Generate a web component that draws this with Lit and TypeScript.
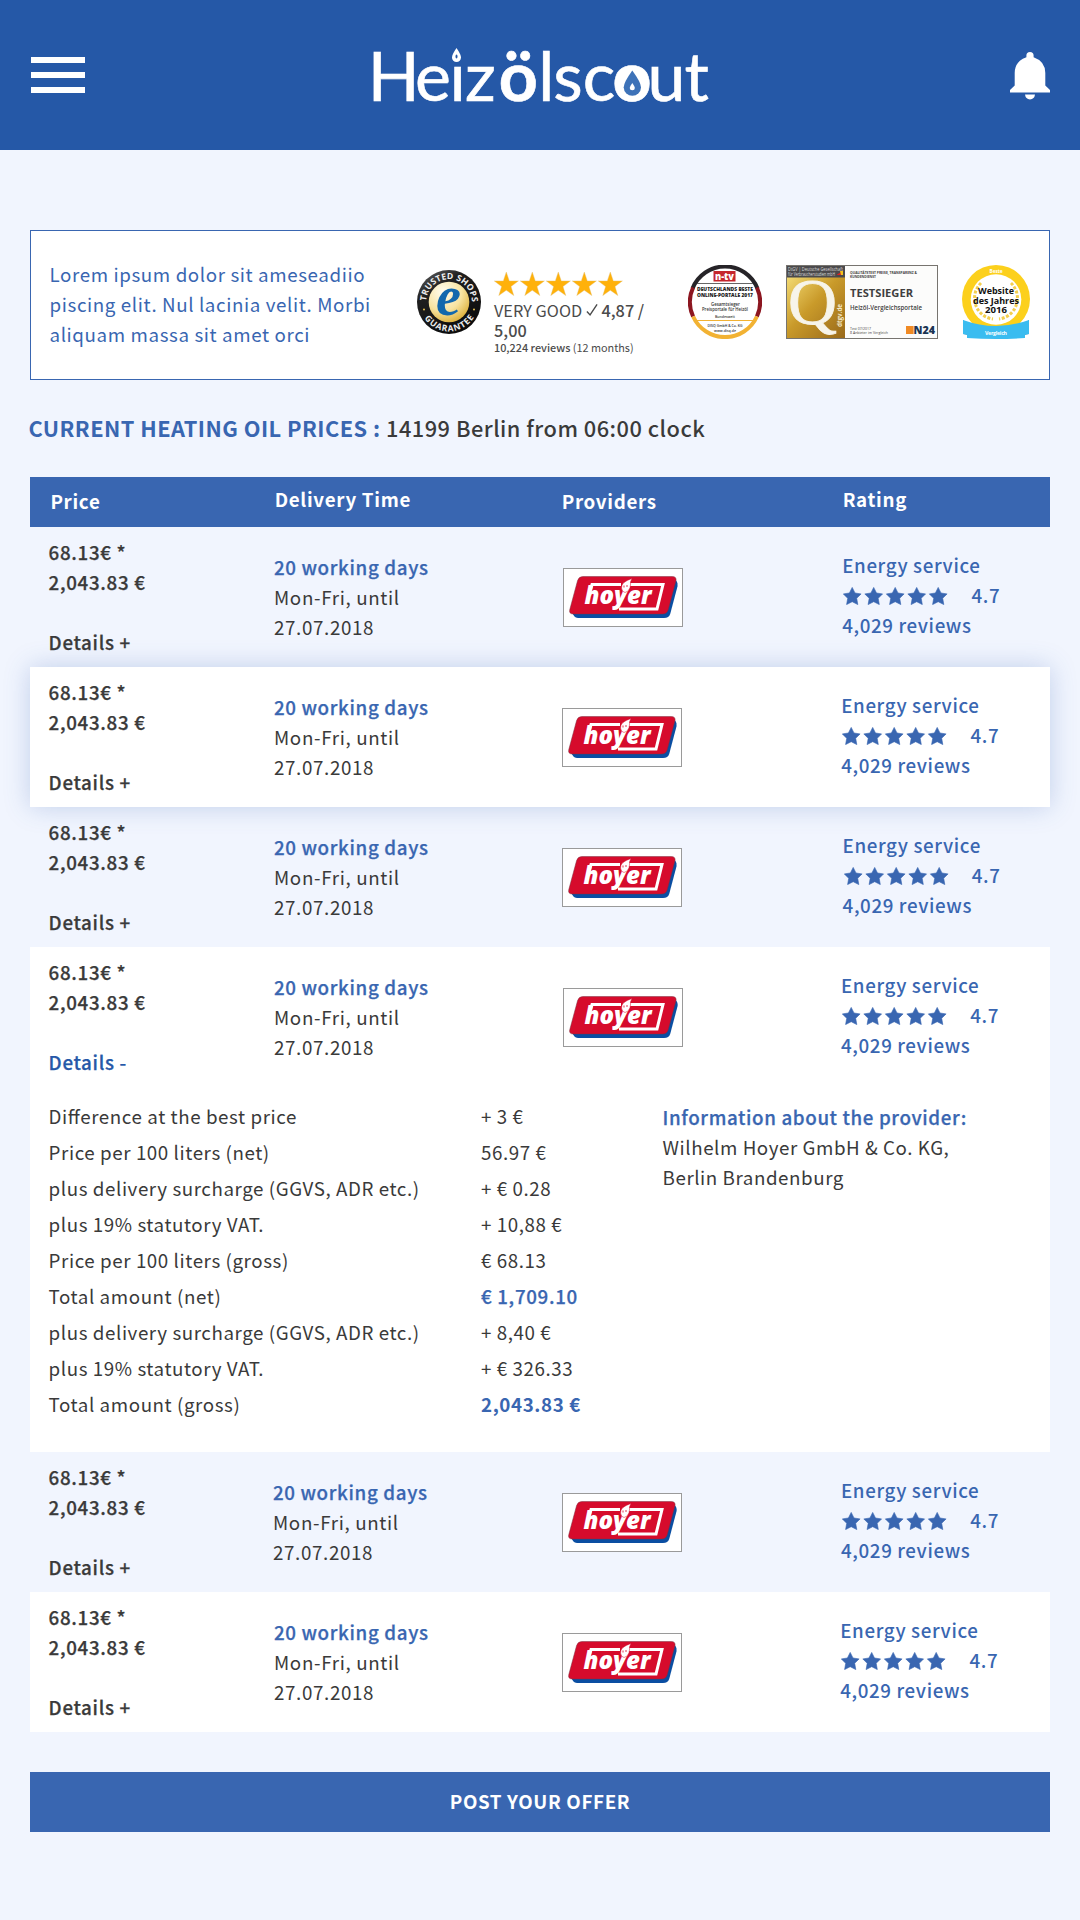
import { LitElement, html, css, svg, nothing } from 'lit';
import { customElement, property } from 'lit/decorators.js';

interface Offer {
  open?: boolean;
  tone: 'plain' | 'white' | 'raised';
  deliveryX: number;
  logoX: number;
  ratingX: number;
}

const OFFERS: Offer[] = [
  { tone: 'plain', deliveryX: 0, logoX: 2, ratingX: 1.2 },
  { tone: 'raised', deliveryX: 0, logoX: 1, ratingX: 0.2 },
  { tone: 'plain', deliveryX: 0, logoX: 1, ratingX: 1.6 },
  { tone: 'white', deliveryX: 0, logoX: 2, ratingX: 0 },
  { tone: 'plain', deliveryX: -1, logoX: 1, ratingX: 0 },
  { tone: 'white', deliveryX: 0, logoX: 1, ratingX: -0.8 },
];
OFFERS[3].open = true;

const BREAKDOWN: { label: string; value: string; level?: string }[] = [
  { label: 'Difference at the best price', value: '+ 3 €' },
  { label: 'Price per 100 liters (net)', value: '56.97 €' },
  { label: 'plus delivery surcharge (GGVS, ADR etc.)', value: '+ € 0.28' },
  { label: 'plus 19% statutory VAT.', value: '+ 10,88 €' },
  { label: 'Price per 100 liters (gross)', value: '€ 68.13' },
  { label: 'Total amount (net)', value: '€ 1,709.10', level: 'sub' },
  { label: 'plus delivery surcharge (GGVS, ADR etc.)', value: '+ 8,40 €' },
  { label: 'plus 19% statutory VAT.', value: '+ € 326.33' },
  { label: 'Total amount (gross)', value: '2,043.83 €', level: 'total' },
];

const FIVE = [0, 1, 2, 3, 4];

@customElement('hoyer-logo')
class HoyerLogo extends LitElement {
  static styles = css`
    :host { display: block; box-sizing: border-box; width: 120px; height: 59px; border: 1px solid #9a9a9a; background: #fff; }
    svg { display: block; }
    .name { font: italic 800 24px "Open Sans", sans-serif; letter-spacing: 0; fill: #fff; }
  `;
  render() {
    return html`<svg width="118" height="57" viewBox="1 1 118 57">
      <path fill="#0a4ea2" d="M7 42 L11.5 48.6 Q12.5 50 15 50 H101 Q106 50 107.2 46 L114.6 18 Q115 15 113.5 13 L110 9 Z"/>
      <path fill="#d60b2c" stroke="#7c3040" stroke-width=".5" d="M20 8.5 H109 Q114 8.5 112.9 13 L105.3 41.5 Q104 46 99.5 46 H10.5 Q5.6 46 6.8 41.5 L14.6 12.5 Q15.8 8.5 20 8.5 Z"/>
      <path fill="none" stroke="#fff" stroke-width="3" d="M26.5 25 L29 16.4 H58 M66 16.4 H100 L94 41 H56"/>
      <text class="name" x="21.5" y="36.3" textLength="67" lengthAdjust="spacingAndGlyphs">hoyer</text>
      <path fill="#fff" stroke="#d60b2c" stroke-width=".5" d="M69 10.5 Q58 14 58.5 20 Q59 24 62 24.5 Q67 23 67.5 17 Q67 13.5 69 10.5 Z"/>
      <path fill="none" stroke="#d60b2c" stroke-width=".8" d="M61 19.5 V17.5 M64 19 V17"/>
    </svg>`;
  }
}

@customElement('trust-seals')
class TrustSeals extends LitElement {
  static styles = css`
    :host { display: flex; align-items: flex-start; font-family: "Noto Sans CJK SC", sans-serif; }
    svg { display: block; flex: none; }
    .shop { margin-top: 39px; }
    .score { width: 170px; margin: 41px 0 0 13px; color: #4b4b4b; }
    .verdict { font-size: 16.3px; line-height: 20px; margin-top: 4px; white-space: nowrap; }
    .verdict b { font-weight: 500; }
    .verdict .tick { display: inline-block; }
    .count { font-size: 10.85px; line-height: 14px; white-space: nowrap; }
    .count b { font-weight: 500; }
    .ntv, .test, .site { margin: 34px 0 0 24px; }
    .ring { font: 700 8.6px "Open Sans", sans-serif; fill: #eee; }
    .e { font: italic 700 58px "Liberation Serif", serif; fill: #1268ad; }
    .cond { font-family: "Open Sans", sans-serif; }
  `;
  render() {
    return html`
      <svg class="shop" width="64" height="64" viewBox="0 0 64 64">
        <defs>
          <radialGradient id="gold" cx=".35" cy=".25" r=".85"><stop offset="0" stop-color="#fffdf0"/><stop offset=".55" stop-color="#f7e3a0"/><stop offset="1" stop-color="#d9a92c"/></radialGradient>
          <linearGradient id="dark" x1="0" y1="0" x2=".6" y2="1"><stop offset="0" stop-color="#6a6a6a"/><stop offset=".35" stop-color="#1f1f1f"/><stop offset="1" stop-color="#0c0c0c"/></linearGradient>
          <path id="up" d="M9.2 32 A22.8 22.8 0 0 1 54.8 32"/>
          <path id="down" d="M2.6 32 A29.4 29.4 0 0 0 61.4 32"/>
        </defs>
        <circle cx="32" cy="32" r="32" fill="url(#dark)"/>
        <circle cx="32" cy="32" r="20.3" fill="url(#gold)"/>
        <text class="ring"><textPath href="#up" startOffset="1" textLength="70">TRUSTED SHOPS</textPath></text>
        <text class="ring"><textPath href="#down" startOffset="17" textLength="59">GUARANTEE</textPath></text>
        <circle cx="7" cy="39.5" r="1" fill="#e6c04f"/><circle cx="57" cy="39.5" r="1" fill="#e6c04f"/>
        <text class="e" x="19" y="44.5" textLength="25" lengthAdjust="spacingAndGlyphs">e</text>
      </svg>
      <div class="score">
        <svg width="130" height="24" viewBox="0 0 130 24">
          ${FIVE.map((i) => svg`<path transform="translate(${i * 26} 0)" fill="#ffb10a" stroke="#e2c27a" stroke-width=".4" d="M12.3 0 L15.3 8.9 H24.4 L17 14.6 L19.8 23.6 L12.3 18.2 L4.8 23.6 L7.6 14.6 L.3 8.9 H9.3 Z"/>`)}
        </svg>
        <div class="verdict">VERY GOOD <svg class="tick" width="12" height="14" viewBox="0 0 13 14"><path d="M1 8.6 L4.4 12.4 L12 1" fill="none" stroke="#4b4b4b" stroke-width="1.5"/></svg> <b>4,87 /<br>5,00</b></div>
        <div class="count"><b>10,224 reviews</b> (12 months)</div>
      </div>
      <svg class="ntv cond" width="74" height="74" viewBox="0 0 74 74">
        <circle cx="37" cy="37" r="35" fill="#fff"/>
        <g fill="none" stroke-width="4">
          <path stroke="#262428" d="M4.5 23.5 A35 35 0 0 1 69.5 23.5"/>
          <path stroke="#8c1620" d="M5.1 22.5 A35 35 0 0 0 5.1 51.5 M68.9 22.5 A35 35 0 0 1 68.9 51.5"/>
          <path stroke="#f2b233" d="M5.1 51.5 A35 35 0 0 0 68.9 51.5"/>
        </g>
        <rect x="25.5" y="6" width="22" height="10.5" fill="#c5262d"/>
        <text x="27" y="15" font-size="11" font-weight="800" fill="#fff" textLength="19" lengthAdjust="spacingAndGlyphs">n-tv</text>
        <path d="M9 18.5 H65" stroke="#555" stroke-width=".9"/>
        <g fill="#222" font-weight="800" font-size="5.4">
          <text x="9" y="26" textLength="56" lengthAdjust="spacingAndGlyphs">DEUTSCHLANDS BESTE</text>
          <text x="9" y="31.5" textLength="56" lengthAdjust="spacingAndGlyphs">ONLINE-PORTALE 2017</text>
        </g>
        <g fill="#333" font-weight="600" font-size="5">
          <text x="23" y="40.5" textLength="29" lengthAdjust="spacingAndGlyphs">Gesamtsieger</text>
          <text x="14" y="46" textLength="46" lengthAdjust="spacingAndGlyphs">Preisportale für Heizöl</text>
          <text x="27" y="53" font-size="3.6" textLength="20" lengthAdjust="spacingAndGlyphs">Bundesweit</text>
          <text x="19.5" y="62" font-size="4" textLength="35" lengthAdjust="spacingAndGlyphs">DISQ GmbH &amp; Co. KG</text>
          <text x="26" y="66.7" font-size="3.8" textLength="22" lengthAdjust="spacingAndGlyphs">www.disq.de</text>
        </g>
        <path d="M6 55.5 H68" stroke="#f2b233" stroke-width="1"/>
      </svg>
      <svg class="test cond" width="152" height="74" viewBox="0 0 152 74">
        <defs><linearGradient id="q" x1="0" y1="0" x2="1" y2="1"><stop offset="0" stop-color="#f3da72"/><stop offset=".45" stop-color="#c99a2a"/><stop offset="1" stop-color="#99691a"/></linearGradient></defs>
        <rect x=".5" y=".5" width="151" height="73" fill="#fcfcfb" stroke="#77746f"/>
        <rect x="1" y="12" width="58" height="61" fill="url(#q)"/>
        <rect x="1" y="1" width="58" height="11.5" fill="#4b4a4c"/>
        <g fill="#ddd" font-size="4.6">
          <text x="2" y="5.8" textLength="55" lengthAdjust="spacingAndGlyphs">DtGV | Deutsche Gesellschaft</text>
          <text x="2" y="10.6" textLength="47" lengthAdjust="spacingAndGlyphs">für Verbraucherstudien mbH</text>
        </g>
        <path d="M51 9.5 L57 6 V10 H51 Z" fill="#d22"/><path d="M54 6 H57 V10 H55 Z" fill="#f4c21c"/>
        <text x="2" y="59" font-size="65" font-family="Liberation Serif, serif" fill="#f7f4ea" stroke="#f7f4ea" stroke-width=".8" textLength="49" lengthAdjust="spacingAndGlyphs">Q</text>
        <text transform="translate(55.5 62) rotate(-90)" font-size="7" font-weight="700" fill="#f3e8c8" textLength="23" lengthAdjust="spacingAndGlyphs">dtgv.de</text>
        <g fill="#3f3f3f">
          <text x="64" y="9" font-size="3.9" font-weight="700" textLength="67" lengthAdjust="spacingAndGlyphs">QUALITÄTSTEST PREISE, TRANSPARENZ &amp;</text>
          <text x="64" y="13.4" font-size="3.9" font-weight="700" textLength="26" lengthAdjust="spacingAndGlyphs">KUNDENDIENST</text>
          <text x="64" y="32.3" font-size="11.4" font-weight="700" textLength="63" lengthAdjust="spacingAndGlyphs">TESTSIEGER</text>
          <text x="64" y="45" font-size="7.6" font-weight="600" textLength="72" lengthAdjust="spacingAndGlyphs">Heizöl-Vergleichsportale</text>
          <text x="64" y="65" font-size="3.6" textLength="21" lengthAdjust="spacingAndGlyphs">Test 07/2017</text>
          <text x="64" y="69.4" font-size="3.6" textLength="38" lengthAdjust="spacingAndGlyphs">8 Anbieter im Vergleich</text>
        </g>
        <rect x="120" y="61" width="7.6" height="8" fill="#f08a24"/>
        <text x="127.5" y="69.2" font-size="11.2" font-weight="800" fill="#1b3553" textLength="21.5" lengthAdjust="spacingAndGlyphs">N24</text>
      </svg>
      <svg class="site cond" width="68" height="74" viewBox="0 0 68 74">
        <circle cx="34" cy="34" r="34" fill="#fcd01c"/>
        <circle cx="34" cy="34.5" r="25.3" fill="#fff"/>
        <g fill="none" stroke="#f3cf4f" stroke-width="3" stroke-dasharray="3 1.6"><path d="M19 18 A21 21 0 0 0 31 54"/><path d="M49 18 A21 21 0 0 1 37 54"/></g>
        <text x="27.5" y="7.6" font-size="4.8" font-weight="700" fill="#fff" textLength="13">Beste</text>
        <g fill="#111" font-weight="700" font-size="8.6">
          <text x="16" y="29.4" textLength="36" lengthAdjust="spacingAndGlyphs">Website</text>
          <text x="11" y="38.6" textLength="46" lengthAdjust="spacingAndGlyphs">des Jahres</text>
          <text x="23" y="47.6" textLength="22" lengthAdjust="spacingAndGlyphs">2016</text>
        </g>
        <path fill="#1c8fc6" d="M1 55 L6 59 V70 L1 69 Z M67 55 L62 59 V70 L67 69 Z"/>
        <path fill="#3abcf0" d="M1 55 Q34 67 67 55 V69 L63 69.5 V73 Q34 75 5 73 V69.5 L1 69 Z"/>
        <text x="23" y="70" font-size="5.2" font-weight="700" fill="#fff" textLength="22">Vergleich</text>
      </svg>
    `;
  }
}

@customElement('offer-row')
class OfferRow extends LitElement {
  @property({ attribute: false }) offer!: Offer;

  static styles = css`
    :host { display: block; }
    .cells { display: grid; grid-template-columns: 244px 287px 280px 1fr; height: 140px; line-height: 30px; }
    .card.white, .card.raised { background: #fff; }
    .card.raised { position: relative; z-index: 1; box-shadow: 0 0 24px rgba(57, 102, 177, .26); }
    .price { padding: 10px 0 0 18.6px; font-weight: 500; letter-spacing: .68px; -webkit-text-stroke: .25px; }
    .toggle { margin-top: 30px; }
    .toggle.open { color: #2558a8; }
    .delivery { padding-top: 25px; }
    .days { color: #3966b1; font-weight: 500; letter-spacing: .65px; -webkit-text-stroke: .25px; }
    .logo { padding-top: 41px; }
    .rating { padding-top: 23px; color: #3966b1; font-weight: 500; letter-spacing: .62px; }
    .stars { display: flex; align-items: center; height: 30px; }
    .stars svg { display: block; margin-left: 1.2px; }
    .stars span { margin-left: 22px; }
    .more { display: flex; padding: 11px 0 30px 18.6px; }
    .breakdown { display: grid; grid-template-columns: 432.4px 181.6px; line-height: 36px; letter-spacing: .58px; font-feature-settings: "liga" 1; }
    .sub { color: #3966b1; font-weight: 500; letter-spacing: .68px; -webkit-text-stroke: .25px; }
    .total { color: #3966b1; font-weight: 700; letter-spacing: .6px; }
    .info { padding-top: 4px; line-height: 30px; letter-spacing: .56px; }
    .info b { display: block; color: #3966b1; font-weight: 500; letter-spacing: .62px; -webkit-text-stroke: .25px; }
  `;

  render() {
    const o = this.offer;
    return html`<div class="card ${o.tone}">
      <div class="cells">
        <div class="price">
          <div>68.13€ *</div>
          <div>2,043.83 €</div>
          <div class="toggle ${o.open ? 'open' : ''}">Details ${o.open ? '-' : '+'}</div>
        </div>
        <div class="delivery" style="margin-left:${o.deliveryX}px">
          <div class="days">20 working days</div>
          <div>Mon-Fri, until<br>27.07.2018</div>
        </div>
        <div class="logo" style="margin-left:${o.logoX}px"><hoyer-logo></hoyer-logo></div>
        <div class="rating" style="margin-left:${o.ratingX}px">
          <div>Energy service</div>
          <div class="stars">
            <svg width="106" height="19" viewBox="0 0 106 19">
              ${FIVE.map((i) => svg`<path transform="translate(${i * 21.5} 1)" fill="#3966b1" stroke="#3966b1" stroke-width=".6" stroke-linejoin="round" d="M9.2 .4 L12 6 L18.1 6.9 L13.7 11.3 L14.8 17.6 L9.2 14.7 L3.6 17.6 L4.7 11.3 L.3 6.9 L6.4 6 Z"/>`)}
            </svg><span>4.7</span>
          </div>
          <div>4,029 reviews</div>
        </div>
      </div>
      ${o.open
        ? html`<div class="more">
            <div class="breakdown">
              ${BREAKDOWN.map((l) => html`<div>${l.label}</div><div class=${l.level ?? ''}>${l.value}</div>`)}
            </div>
            <div class="info"><b>Information about the provider:</b>Wilhelm Hoyer GmbH &amp; Co. KG,<br>Berlin Brandenburg</div>
          </div>`
        : nothing}
    </div>`;
  }
}

@customElement('app-root')
class AppRoot extends LitElement {
  static styles = css`
    :host { display: block; box-sizing: border-box; min-height: 1920px; background: #f1f5fe; color: #3a3a3a; font: 400 18.75px/30px "Noto Sans CJK SC", "Noto Sans", sans-serif; letter-spacing: .65px; }
    .bar { display: flex; justify-content: space-between; align-items: flex-start; height: 150px; box-sizing: border-box; padding: 0 30px 0 31px; background: #2558a7; }
    .menu { display: grid; gap: 9px; width: 54px; margin-top: 57px; }
    .menu i { height: 6px; background: #fff; }
    .brand { display: block; margin: 35px 10px 0 0; overflow: visible; }
    .brand text { font: 400 68px Lato, sans-serif; letter-spacing: 0; fill: #fff; stroke: #fff; stroke-width: .6px; }
    .brand .heavy { font-weight: 700; }
    .bell { display: block; margin-top: 51.5px; }
    main { padding: 80px 30px 0; }
    .intro { display: flex; box-sizing: border-box; height: 150px; border: 1px solid #3966b1; background: #fff; letter-spacing: .61px; color: #3966b1; }
    .intro p { flex: none; width: 350px; margin: 28px 0 0 18.5px; }
    .intro trust-seals { margin-left: 17.5px; letter-spacing: 0; }
    h1 { margin: 32px 0 0 -1.6px; font-size: 21.8px; line-height: 32px; letter-spacing: .48px; font-weight: 500; }
    h1 b { color: #3966b1; font-weight: 700; letter-spacing: .45px; }
    .head { display: grid; grid-template-columns: 244px 287px 280px 1fr; height: 50px; margin-top: 33px; background: #3966b1; color: #fff; font-weight: 700; letter-spacing: .7px; }
    .head div { padding: 9px 0 0 .7px; }
    .head div:nth-child(even) { padding-top: 7px; }
    .head div:first-child { padding-left: 20.4px; }
    .head div:last-child { padding-left: 1.7px; }
    .post { display: block; width: 100%; height: 60px; margin-top: 40px; padding: 0 0 3px; border: 0; background: #3966b1; color: #fff; font: 700 18.75px/30px "Noto Sans CJK SC", sans-serif; letter-spacing: .64px; }
  `;

  render() {
    return html`
      <header class="bar">
        <div class="menu"><i></i><i></i><i></i></div>
        <svg class="brand" width="345" height="80" viewBox="370 35 345 80">
          <text y="101"><tspan x="367.7 415 449.5 465 ">Heiz</tspan><tspan class="heavy" x="498.8">ö</tspan><tspan x="538.3 553.3 582.8">lsc</tspan><tspan class="heavy" x="612.5">o</tspan><tspan x="647.5 684.5">ut</tspan></text>
          <rect x="450" y="46" width="13" height="18.5" fill="#2558a7"/>
          <path fill="#fff" d="M456.5 48 Q461 54.5 461 57.6 A4.5 4.5 0 0 1 452 57.6 Q452 54.5 456.5 48 Z"/>
          <ellipse cx="456.5" cy="56.4" rx="1" ry="2" fill="#2558a7"/>
          <ellipse cx="632" cy="84.3" rx="16" ry="17.3" fill="#fff"/>
          <path fill="#3d72b8" d="M632.3 70.5 Q641 82.5 641 87.3 A8.6 8.5 0 0 1 623.7 87.3 Q623.7 82.5 632.3 70.5 Z"/>
          <path fill="#fff" d="M632.3 83 Q634.8 86.5 634.8 87.8 A2.5 2.5 0 0 1 629.8 87.8 Q629.8 86.5 632.3 83 Z"/>
        </svg>
        <svg class="bell" width="40" height="48" viewBox="0 0 40 48">
          <path fill="#fff" d="M20 0 A3.6 3.6 0 0 1 23.6 3.6 V5.2 Q35.3 9.3 35.3 21 V33.4 L40 38 V40.6 H0 V38 L4.7 33.4 V21 Q4.7 9.3 16.4 5.2 V3.6 A3.6 3.6 0 0 1 20 0 Z M15 42.6 H25 Q24.4 47.4 20 47.4 Q15.6 47.4 15 42.6 Z"/>
        </svg>
      </header>
      <main>
        <section class="intro">
          <p>Lorem ipsum dolor sit ameseadiio<br>piscing elit. Nul lacinia velit. Morbi<br>aliquam massa sit amet orci</p>
          <trust-seals></trust-seals>
        </section>
        <h1><b>CURRENT HEATING OIL PRICES :</b> 14199 Berlin from 06:00 clock</h1>
        <div class="head"><div>Price</div><div>Delivery Time</div><div>Providers</div><div>Rating</div></div>
        ${OFFERS.map((o) => html`<offer-row .offer=${o}></offer-row>`)}
        <button class="post">POST YOUR OFFER</button>
      </main>
    `;
  }
}
